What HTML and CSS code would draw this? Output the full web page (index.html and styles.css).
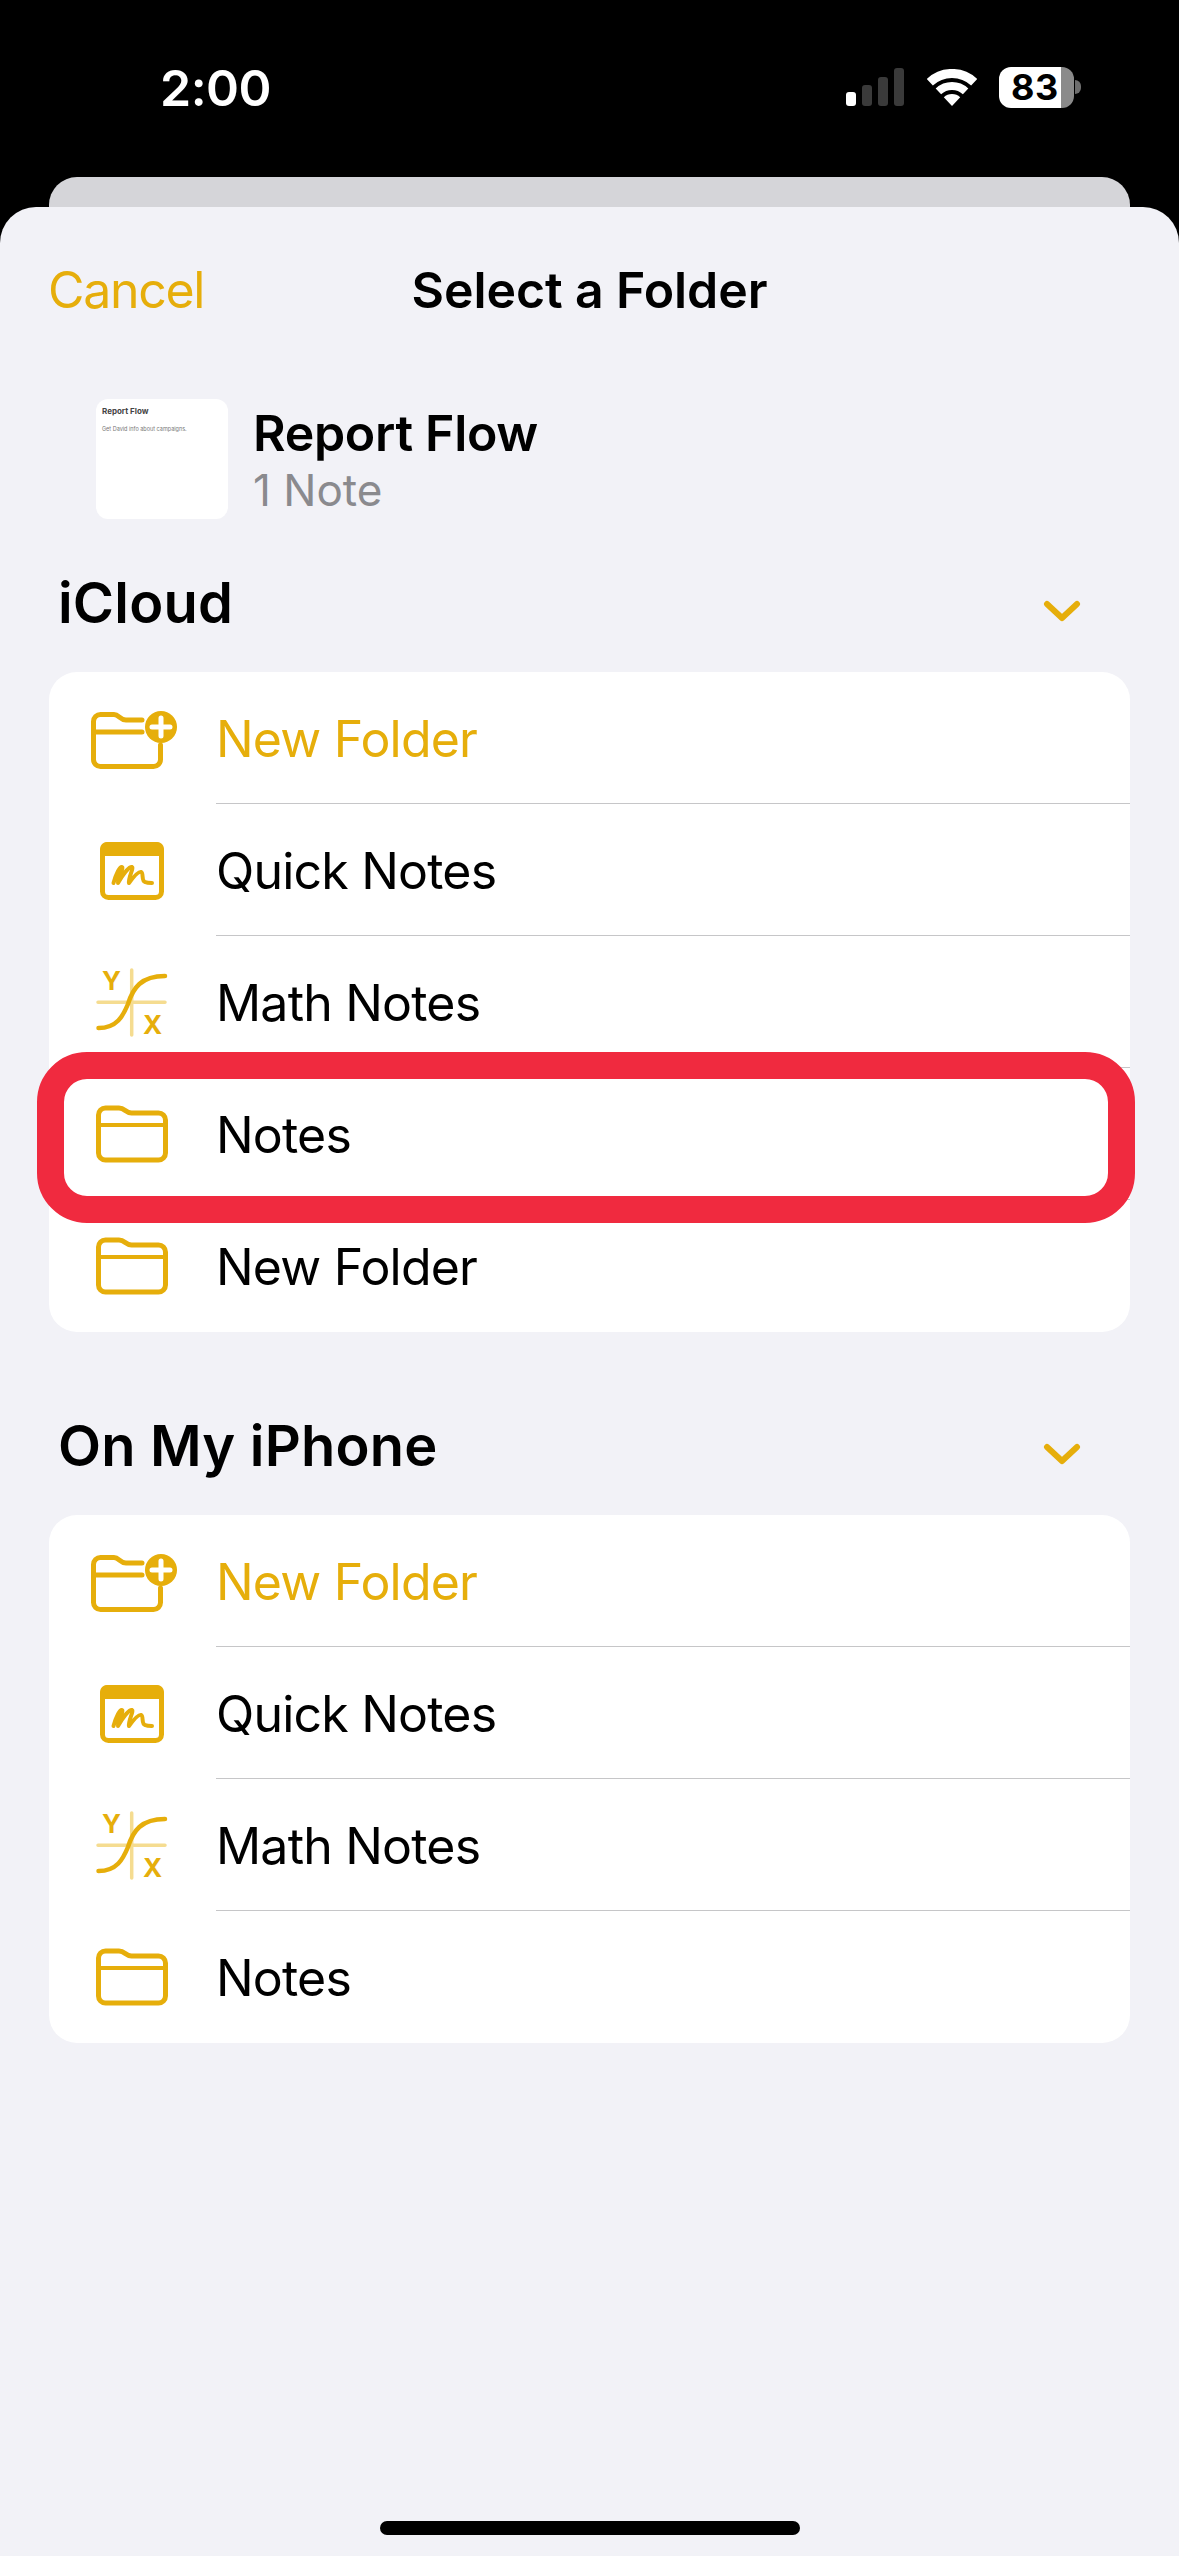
FILE: index.html
```html
<!DOCTYPE html>
<html lang="en">
<head>
  <meta charset="UTF-8">
  <meta name="viewport" content="width=device-width, initial-scale=1">
  <title>Select a Folder</title>
  <link rel="stylesheet" href="styles.css">
</head>
<body>

<svg class="defs" width="0" height="0" aria-hidden="true">
  <symbol id="icon-new-folder" viewBox="0 0 90 80">
    <path class="line" d="M55 22H39c-6 0-7-5.500-12-5.500H13.500a7 7 0 0 0-7 7V61.500a7 7 0 0 0 7 7H66.500a7 7 0 0 0 7-7V47"/>
    <path class="line" d="M6.500 34H55"/>
    <circle class="solid" cx="74" cy="29" r="16"/>
    <path class="plus" d="M74 20V38M65 29H83"/>
  </symbol>
  <symbol id="icon-quick" viewBox="0 0 90 80">
    <rect class="line" x="15.500" y="14.500" width="59" height="53" rx="6"/>
    <path class="solid" d="M13 26V19a7 7 0 0 1 7-7H70a7 7 0 0 1 7 7V26Z"/>
    <path class="scribble" d="M26.500 53C29 44 33 36 35 37C37 38 31 47 31 53C35 46 42 36 45 37C47 38 41 48 42 53C45 49 51 41 54 42C57 43 54 51 58 52C60 53 63 53 65 53"/>
  </symbol>
  <symbol id="icon-graph" viewBox="0 0 90 80">
    <path class="axis" d="M44.700 8V73M11 40.300H78"/>
    <path class="curve" d="M11.500 66C30 66 36 54 41 42C46 26 54 14 78 14"/>
  </symbol>
  <symbol id="icon-folder" viewBox="0 0 90 80">
    <path class="line" d="M11.500 31V21a7 7 0 0 1 7-7H32c6 0 6.500 5 12.500 5H71.500a7 7 0 0 1 7 7V59a7 7 0 0 1-7 7H18.500a7 7 0 0 1-7-7Z"/>
    <path class="line thin" d="M11.500 31H78.500"/>
  </symbol>
  <symbol id="icon-chevron" viewBox="0 0 40 24">
    <path class="chevron" d="M5 4L20 18L35 4"/>
  </symbol>
</svg>

<div class="status-bar">
  <span class="time">2:00</span>
  <div class="status-icons">
    <div class="signal">
      <i class="bar on"></i>
      <i class="bar b2"></i>
      <i class="bar b3"></i>
      <i class="bar b4"></i>
    </div>
    <svg class="wifi" width="50" height="37" viewBox="0 0 50 37">
      <path d="M2.800 13.200A32.500 32.500 0 0 1 47.200 13.200" fill="none" stroke="#fff" stroke-width="9"/>
      <path d="M11.400 22.400A20 20 0 0 1 38.600 22.400" fill="none" stroke="#fff" stroke-width="8"/>
      <path d="M25 37L16.800 28.200A12 12 0 0 1 33.200 28.200Z" fill="#fff"/>
    </svg>
    <div class="battery">83</div>
  </div>
</div>

<div class="back-card"></div>

<div class="sheet">
  <div class="nav">
    <span class="cancel">Cancel</span>
    <h1>Select a Folder</h1>
  </div>

  <div class="note-info">
    <div class="thumb">
      <div class="thumb-title">Report Flow</div>
      <div class="thumb-text">Get David info about campaigns.</div>
    </div>
    <div>
      <div class="note-title">Report Flow</div>
      <div class="note-count">1 Note</div>
    </div>
  </div>

  <div class="section-head">
    <h2>iCloud</h2>
    <svg class="chev"><use href="#icon-chevron"/></svg>
  </div>
  <div class="list">
    <div class="row"><svg class="icon"><use href="#icon-new-folder"/></svg><div class="label accent">New Folder</div></div>
    <div class="row"><svg class="icon"><use href="#icon-quick"/></svg><div class="label">Quick Notes</div></div>
    <div class="row">
      <svg class="icon" viewBox="0 0 90 80">
        <use href="#icon-graph" width="90" height="80"/>
        <text class="axis-label" x="24.500" y="28" text-anchor="middle">Y</text>
        <text class="axis-label" x="65.500" y="72" text-anchor="middle">X</text>
      </svg>
      <div class="label">Math Notes</div>
    </div>
    <div class="row marked"><svg class="icon"><use href="#icon-folder"/></svg><div class="label">Notes</div></div>
    <div class="row"><svg class="icon"><use href="#icon-folder"/></svg><div class="label">New Folder</div></div>
  </div>

  <div class="section-head second">
    <h2>On My iPhone</h2>
    <svg class="chev"><use href="#icon-chevron"/></svg>
  </div>
  <div class="list">
    <div class="row"><svg class="icon"><use href="#icon-new-folder"/></svg><div class="label accent">New Folder</div></div>
    <div class="row"><svg class="icon"><use href="#icon-quick"/></svg><div class="label">Quick Notes</div></div>
    <div class="row">
      <svg class="icon" viewBox="0 0 90 80">
        <use href="#icon-graph" width="90" height="80"/>
        <text class="axis-label" x="24.500" y="28" text-anchor="middle">Y</text>
        <text class="axis-label" x="65.500" y="72" text-anchor="middle">X</text>
      </svg>
      <div class="label">Math Notes</div>
    </div>
    <div class="row"><svg class="icon"><use href="#icon-folder"/></svg><div class="label">Notes</div></div>
  </div>

  <div class="home-indicator"></div>
</div>

</body>
</html>
```

FILE: styles.css
```css
* {
  box-sizing: border-box;
}
html, body {
  margin: 0;
  height: 2556px;
  overflow: hidden;
}
body {
  background: #000;
  font-family: Inter, "Liberation Sans", sans-serif;
  color: #000;
}
.defs {
  position: absolute;
}

/* status bar */
.status-bar {
  height: 177px;
  padding: 61px 105px 0 160px;
  display: flex;
  justify-content: space-between;
  align-items: flex-start;
}
.time {
  color: #fff;
  font-size: 50px;
  font-weight: 600;
  letter-spacing: -0.5px;
  line-height: 54px;
}
.status-icons {
  display: flex;
  align-items: flex-start;
  margin-top: 6px;
}
.signal {
  display: flex;
  align-items: flex-end;
  gap: 6px;
  height: 38px;
  margin-top: 1px;
}
.bar {
  width: 10px;
  border-radius: 3px;
  background: #3a3a3a;
}
.bar.on {
  height: 14px;
  background: #fff;
}
.b2 {
  height: 21px;
}
.b3 {
  height: 29px;
}
.b4 {
  height: 38px;
}
.wifi {
  margin: 2px 22px 0 23px;
}
.battery {
  position: relative;
  width: 75px;
  height: 41px;
  border-radius: 12px;
  background: linear-gradient(90deg, #fff 62px, #8a8a8a 62px);
  color: #000;
  font-size: 36px;
  font-weight: 700;
  line-height: 41px;
  padding-left: 12px;
  letter-spacing: 0.5px;
}
.battery::after {
  content: "";
  position: absolute;
  right: -7px;
  top: 13px;
  width: 6px;
  height: 14px;
  border-radius: 0 7px 7px 0;
  background: #6e6e6e;
}

/* sheets */
.back-card {
  height: 30px;
  margin: 0 49px;
  background: #d5d5d9;
  border-radius: 28px 28px 0 0;
}
.sheet {
  height: 2349px;
  padding: 0 49px;
  background: #f2f2f7;
  border-radius: 36px 36px 0 0;
  display: flex;
  flex-direction: column;
}
.nav {
  height: 166px;
  position: relative;
  display: flex;
  align-items: center;
  justify-content: center;
}
.cancel {
  position: absolute;
  left: -1px;
  color: #e6ae0b;
  font-size: 50px;
  letter-spacing: -1.3px;
}
h1 {
  margin: 0;
  font-size: 50px;
  font-weight: 600;
  letter-spacing: -0.1px;
}

/* note being moved */
.note-info {
  height: 120px;
  margin: 26px 0 34px 47px;
  display: flex;
  align-items: center;
  gap: 25px;
}
.thumb {
  width: 132px;
  height: 120px;
  background: #fff;
  border-radius: 12px;
  padding: 7px 6px;
}
.thumb-title {
  font-size: 8px;
  font-weight: 700;
  color: #444;
  margin-bottom: 10px;
}
.thumb-text {
  font-size: 5.5px;
  color: #777;
}
.note-title {
  font-size: 50px;
  font-weight: 600;
  letter-spacing: -0.3px;
  line-height: 62px;
}
.note-count {
  font-size: 44px;
  color: #8a8a8e;
  line-height: 52px;
}

/* sections */
.section-head {
  height: 100px;
  margin-bottom: 19px;
  padding: 0 48px 0 9px;
  display: flex;
  justify-content: space-between;
  align-items: center;
}
.section-head.second {
  margin-top: 64px;
}
h2 {
  margin: 0;
  font-size: 56px;
  font-weight: 600;
  letter-spacing: 0.2px;
}
.chev {
  width: 40px;
  height: 24px;
  margin-top: 18px;
}
.chevron {
  fill: none;
  stroke: #e6ae0b;
  stroke-width: 6;
  stroke-linecap: round;
  stroke-linejoin: round;
}
.list {
  background: #fff;
  border-radius: 28px;
}
.row {
  position: relative;
  height: 132px;
  display: flex;
  align-items: center;
}
.marked::after {
  content: "";
  position: absolute;
  top: -16px;
  bottom: -23px;
  left: -12px;
  right: -5px;
  border: 27px solid #f02a3f;
  border-radius: 50px;
}
.icon {
  width: 90px;
  height: 80px;
  margin: 0 39px 0 38px;
  flex-shrink: 0;
}
.label {
  flex: 1;
  height: 100%;
  padding-top: 2px;
  display: flex;
  align-items: center;
  border-bottom: 1px solid #c6c6c8;
  font-size: 50px;
  letter-spacing: -0.8px;
}
.row:last-child .label {
  border-bottom: none;
}
.accent {
  color: #e6ae0b;
}

/* icon parts */
.line {
  fill: none;
  stroke: #e6ae0b;
  stroke-width: 5;
  stroke-linecap: round;
  stroke-linejoin: round;
}
.line.thin {
  stroke-width: 4;
}
.solid {
  fill: #e6ae0b;
}
.plus {
  fill: none;
  stroke: #fff;
  stroke-width: 5;
  stroke-linecap: round;
}
.scribble {
  fill: none;
  stroke: #e6ae0b;
  stroke-width: 4;
  stroke-linecap: round;
  stroke-linejoin: round;
}
.axis {
  fill: none;
  stroke: #f5dc90;
  stroke-width: 3.5;
  stroke-linecap: round;
}
.curve {
  fill: none;
  stroke: #e6ae0b;
  stroke-width: 4.5;
  stroke-linecap: round;
}
.axis-label {
  fill: #e6ae0b;
  font-family: Inter, "Liberation Sans", sans-serif;
  font-size: 26px;
  font-weight: 700;
}

.home-indicator {
  width: 420px;
  height: 14px;
  margin: auto auto 21px;
  background: #000;
  border-radius: 7px;
}
```
